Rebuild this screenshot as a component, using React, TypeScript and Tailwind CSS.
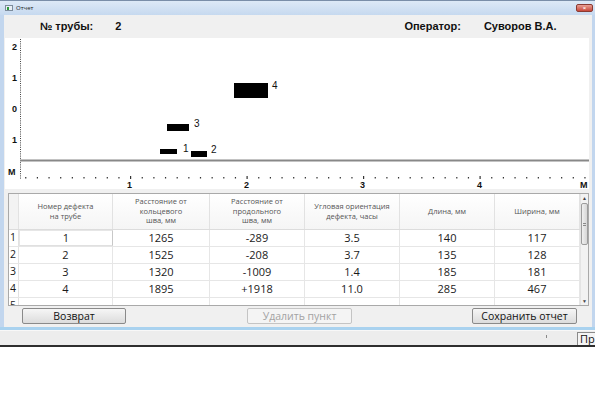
import React from "react";

const ui = { fontFamily: '"Open Sans", "Noto Sans", "Liberation Sans", sans-serif' };
const arial = { fontFamily: '"Liberation Sans", Arial, sans-serif' };

const cols = [
  { w: "w-[94px]", title: ["Номер дефекта", "на трубе"] },
  { w: "w-[97px]", title: ["Расстояние от", "кольцевого", "шва, мм"] },
  { w: "w-[95px]", title: ["Расстояние от", "продольного", "шва, мм"] },
  { w: "w-[95px]", title: ["Угловая ориентация", "дефекта, часы"] },
  { w: "w-[95px]", title: ["Длина, мм"] },
  { w: "w-[85px]", title: ["Ширина, мм"] },
];

const rows = [
  ["1", "1265", "-289", "3.5", "140", "117"],
  ["2", "1525", "-208", "3.7", "135", "128"],
  ["3", "1320", "-1009", "1.4", "185", "181"],
  ["4", "1895", "+1918", "11.0", "285", "467"],
];

function Chart() {
  const xDots = Array.from({ length: 49 }, (_, i) => 8.5 + 11.65 * (i + 1));
  return (
    <svg width="584" height="151" className="block" style={arial}>
      {/* vertical axis */}
      <line x1="15.5" y1="1" x2="15.5" y2="141" stroke="#444" strokeWidth="1" strokeDasharray="1 1.2" />
      {/* x axis dots */}
      {xDots.map((x, i) => (
        <rect key={i} x={x} y={(i + 1) % 10 === 0 ? 138 : 139} width="1.2" height={(i + 1) % 10 === 0 ? 3 : 1.5} fill="#333" />
      ))}
      {/* pipe line */}
      <line x1="15" y1="122.5" x2="584" y2="122.5" stroke="#888" strokeWidth="2" />
      {/* axis labels */}
      <g fontSize="9" fontWeight="700" fill="#111">
        <text x="7" y="12">2</text>
        <text x="7" y="43">1</text>
        <text x="7" y="74">0</text>
        <text x="7" y="105">1</text>
        <text x="3" y="137">M</text>
        <text x="122" y="150">1</text>
        <text x="239" y="150">2</text>
        <text x="355" y="150">3</text>
        <text x="472" y="150">4</text>
        <text x="575" y="150">M</text>
      </g>
      {/* defects */}
      <rect x="229" y="45" width="34" height="15" fill="#000" />
      <rect x="162" y="86" width="22" height="7" fill="#000" />
      <rect x="155" y="111" width="17" height="5" fill="#000" />
      <rect x="186" y="113" width="16" height="6" fill="#000" />
      <g fontSize="10" fill="#111">
        <text x="267" y="51">4</text>
        <text x="189" y="89">3</text>
        <text x="178" y="114">1</text>
        <text x="206" y="115">2</text>
      </g>
    </svg>
  );
}

function Btn({ children, disabled, w }: { children: React.ReactNode; disabled?: boolean; w: string }) {
  return (
    <div
      className={`${w} h-[16px] flex items-center justify-center rounded-[2px] border text-[10.5px] leading-none ${
        disabled
          ? "border-[#c4c4c4] bg-[#f4f4f4] text-[#a3a3a3]"
          : "border-[#8a8a8a] bg-gradient-to-b from-[#f6f6f6] to-[#dcdcdc] text-[#111]"
      }`}
      style={ui}
    >
      {children}
    </div>
  );
}

export default function App() {
  return (
    <div className="w-[595px] h-[419px] bg-white overflow-hidden flex flex-col" style={ui}>
      {/* window */}
      <div className="h-[330px] flex flex-col bg-[#c2d6ee] border-t border-[#7a8ea8]">
        {/* title bar */}
        <div className="h-[14px] flex items-center pl-[5px] pr-[2px] bg-gradient-to-b from-[#dde9f6] to-[#c6d9ef]">
          <div className="w-[8px] h-[6px] bg-[#e8eef4] border border-[#7d8c9c] flex items-center pl-[1px]">
            <div className="w-[2px] h-[3px] bg-[#2e9a3c]" />
          </div>
          <span className="ml-[3px] text-[6px] text-[#222] leading-none">Отчет</span>
          <div className="ml-auto w-[17px] h-[8px] rounded-[2px] bg-gradient-to-b from-[#e8a095] to-[#c7463a] border border-[#8a3a32] flex items-center justify-center">
            <span className="text-[6px] leading-none text-white font-bold">×</span>
          </div>
        </div>
        {/* content */}
        <div className="flex-1 flex flex-col ml-[4px] mr-[3px] bg-[#f0f0f0]">
          <div className="h-[23px] shrink-0 flex items-center text-[11px] font-semibold text-[#111]" style={arial}>
            <span className="ml-[36px]">№ трубы:</span>
            <span className="ml-[22px]">2</span>
            <span className="ml-[283px]">Оператор:</span>
            <span className="ml-[23px]">Суворов В.А.</span>
          </div>
          <div className="ml-[1px] w-[584px] shrink-0 bg-white">
            <Chart />
          </div>
          {/* table */}
          <div className="mt-[4px] ml-[4px] w-[581px] h-[113px] shrink-0 border border-[#a9a9a9] bg-white flex overflow-hidden">
            <div className="flex-1 flex flex-col">
              <div className="h-[36px] shrink-0 flex border-b border-[#dcdcdc] bg-gradient-to-b from-white to-[#f5f5f5]">
                <div className="w-[10px] border-r border-[#e2e2e2] bg-[#f3f3f3]" />
                {cols.map((c, i) => (
                  <div
                    key={i}
                    className={`${c.w} flex flex-col items-center justify-center border-r border-[#e2e2e2] text-[7.5px] leading-[9.5px] text-[#555]`}
                  >
                    {c.title.map((t) => (
                      <span key={t}>{t}</span>
                    ))}
                  </div>
                ))}
              </div>
              {rows.map((r, ri) => (
                <div key={ri} className="h-[17px] shrink-0 flex border-b border-[#e6e6e6] text-[11px] text-[#1a1a1a]">
                  <div className="w-[10px] flex items-center pl-[1px] border-r border-[#e2e2e2] text-[10.5px]">{ri + 1}</div>
                  {r.map((v, ci) => (
                    <div
                      key={ci}
                      className={`${cols[ci].w} flex items-center justify-center border-r border-[#e6e6e6] ${
                        ri === 0 && ci === 0 ? "border border-[#a8a8a8] border-b-[#e0e0e0] border-r-[#c8c8c8]" : ""
                      }`}
                    >
                      {v}
                    </div>
                  ))}
                </div>
              ))}
              <div className="h-[17px] shrink-0 flex text-[10.5px] text-[#1a1a1a]">
                <div className="w-[10px] pl-[1px] border-r border-[#e2e2e2]">5</div>
                {cols.map((c, i) => (
                  <div key={i} className={`${c.w} border-r border-[#e6e6e6]`} />
                ))}
              </div>
            </div>
            {/* scrollbar */}
            <div className="w-[8px] flex flex-col items-center bg-[#f2f2f2] border-l border-[#e4e4e4]">
              <span className="text-[5px] leading-[8px] text-[#444]">▲</span>
              <div className="w-[7px] h-[42px] mt-[1px] rounded-[2px] border border-[#9c9c9c] bg-gradient-to-r from-[#f0f0f0] to-[#d6d6d6] flex items-center justify-center">
                <div className="w-[3px] h-[3px] border-y border-[#8a8a8a]" />
              </div>
              <span className="mt-auto text-[5px] leading-[8px] text-[#444]">▼</span>
            </div>
          </div>
          {/* buttons */}
          <div className="flex items-center mt-[2px]">
            <div className="ml-[18px]">
              <Btn w="w-[104px]">Возврат</Btn>
            </div>
            <div className="ml-[121px]">
              <Btn w="w-[105px]" disabled>
                Удалить пункт
              </Btn>
            </div>
            <div className="ml-[120px]">
              <Btn w="w-[105px]">Сохранить отчет</Btn>
            </div>
          </div>
        </div>
        <div className="h-[3px] bg-[#a9d2ef]" />
      </div>
      {/* strip below */}
      <div className="h-[15px] flex items-start bg-[#ededed] border-t border-[#f8f8f8]">
        <div className="ml-[546px] mt-[4px] w-[1px] h-[3px] bg-[#888]" />
        <div className="ml-auto mt-[1px] w-[18px] h-[14px] border border-[#8a8a8a] border-r-0 bg-[#f4f4f4] text-[11px] leading-[12px] pl-[2px] text-[#111] overflow-hidden">
          Пр
        </div>
      </div>
      <div className="h-[2px] bg-[#2e2e2e]" />
      <div className="flex-1 bg-white" />
    </div>
  );
}
